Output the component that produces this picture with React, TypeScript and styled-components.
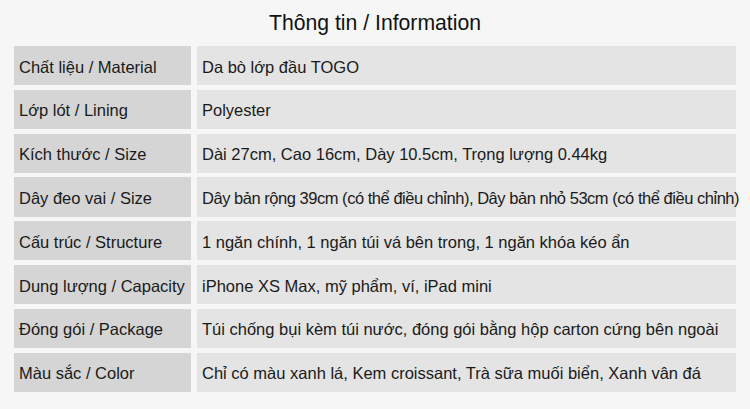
import styled, { createGlobalStyle } from 'styled-components';

const specs = [
    { label: 'Chất liệu / Material', value: 'Da bò lớp đầu TOGO' },
    { label: 'Lớp lót / Lining', value: 'Polyester' },
    { label: 'Kích thước / Size', value: 'Dài 27cm, Cao 16cm, Dày 10.5cm, Trọng lượng 0.44kg' },
    {
        label: 'Dây đeo vai / Size',
        value: 'Dây bản rộng 39cm (có thể điều chỉnh), Dây bản nhỏ 53cm (có thể điều chỉnh)',
        tight: true,
    },
    { label: 'Cấu trúc / Structure', value: '1 ngăn chính, 1 ngăn túi vá bên trong, 1 ngăn khóa kéo ẩn' },
    { label: 'Dung lượng / Capacity', value: 'iPhone XS Max, mỹ phẩm, ví, iPad mini' },
    { label: 'Đóng gói / Package', value: 'Túi chống bụi kèm túi nước, đóng gói bằng hộp carton cứng bên ngoài' },
    { label: 'Màu sắc / Color', value: 'Chỉ có màu xanh lá, Kem croissant, Trà sữa muối biển, Xanh vân đá' },
];

const App = () => (
    <>
        <GlobalStyle />
        <Page>
            <Title>Thông tin / Information</Title>
            <Table>
                {specs.map(({ label, value, tight }) => (
                    <Row key={label}>
                        <Cell $head>{label}</Cell>
                        <Cell $tight={tight}>{value}</Cell>
                    </Row>
                ))}
            </Table>
        </Page>
    </>
);

export default App;

/*
 * Styled declarations
 */
const GlobalStyle = createGlobalStyle`
    body {
        margin: 0;
        background: #f6f6f6;
        font-family: 'Liberation Sans', Arial, sans-serif;
        color: #1a1a1a;
    }
`;

const Page = styled.main`
    width: 750px;
    height: 409px;
    padding: 0 14px;
    box-sizing: border-box;
`;

const Title = styled.h1`
    display: flex;
    align-items: center;
    justify-content: center;
    height: 46px;
    margin: 0;
    padding-bottom: 1px;
    box-sizing: border-box;
    font-size: 21.2px;
    font-weight: normal;
    color: #111;
`;

const Table = styled.div`
    display: grid;
    grid-template-columns: 177px 539px;
    grid-auto-rows: 39.3px;
    column-gap: 6px;
    row-gap: 4.5px;
`;

const Row = styled.div`
    display: contents;
`;

const Cell = styled.div<{ $head?: boolean; $tight?: boolean }>`
    display: flex;
    align-items: center;
    padding: 3px 0 0 ${({ $head }) => ($head ? '5px' : '5px')};
    box-sizing: border-box;
    background: ${({ $head }) => ($head ? '#d5d5d5' : '#e4e4e4')};
    font-size: 16.5px;
    letter-spacing: ${({ $tight }) => ($tight ? '-0.47px' : 'normal')};
    white-space: nowrap;
    overflow: visible;
`;
